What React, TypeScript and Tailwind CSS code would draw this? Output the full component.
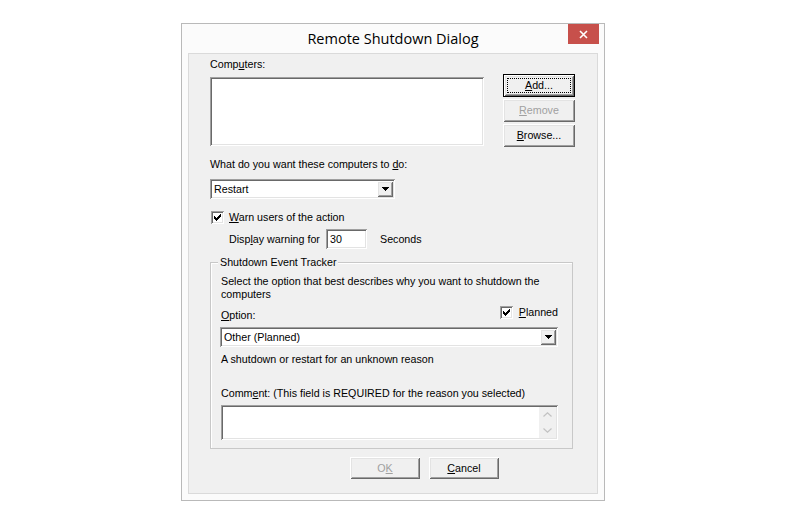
import React from "react";

const raised =
  "shadow-[inset_1px_1px_0_#ffffff,inset_-1px_-1px_0_#696969,inset_2px_2px_0_#e3e3e3,inset_-2px_-2px_0_#a0a0a0]";
const sunken =
  "shadow-[inset_1px_1px_0_#a0a0a0,inset_-1px_-1px_0_#ffffff,inset_2px_2px_0_#696969,inset_-2px_-2px_0_#e3e3e3]";

function Btn({
  children,
  def,
  disabled,
  className = "",
}: {
  children: React.ReactNode;
  def?: boolean;
  disabled?: boolean;
  className?: string;
}) {
  if (def) {
    return (
      <div className={`border border-black bg-[#f0f0f0] flex ${className}`}>
        <div className={`relative flex-1 flex items-center justify-center ${raised}`}>
          <div className="absolute inset-[3px] border border-dotted border-black" />
          <span className="relative">{children}</span>
        </div>
      </div>
    );
  }
  return (
    <div
      className={`bg-[#f0f0f0] flex items-center justify-center ${raised} ${
        disabled ? "text-[#a0a0a0]" : "text-black"
      } ${className}`}
    >
      {children}
    </div>
  );
}

function Arrow() {
  return (
    <svg width="7" height="4" viewBox="0 0 7 4" shapeRendering="crispEdges">
      <rect x="0" y="0" width="7" height="1" fill="#000" />
      <rect x="1" y="1" width="5" height="1" fill="#000" />
      <rect x="2" y="2" width="3" height="1" fill="#000" />
      <rect x="3" y="3" width="1" height="1" fill="#000" />
    </svg>
  );
}

function Select({ value, className = "" }: { value: string; className?: string }) {
  return (
    <div className={`flex bg-white p-[2px] ${sunken} ${className}`}>
      <div className="flex-1 flex items-center pl-[2px]">{value}</div>
      <div className={`w-[16px] bg-[#f0f0f0] flex items-center justify-center ${raised}`}>
        <Arrow />
      </div>
    </div>
  );
}

function Check() {
  return (
    <div className={`w-[13px] h-[13px] shrink-0 bg-white flex items-center justify-center ${sunken}`}>
      <svg width="7" height="7" viewBox="0 0 7 7" shapeRendering="crispEdges">
        <rect x="6" y="0" width="1" height="1" fill="#000" />
        <rect x="5" y="1" width="2" height="1" fill="#000" />
        <rect x="0" y="2" width="1" height="1" fill="#000" />
        <rect x="4" y="2" width="3" height="1" fill="#000" />
        <rect x="0" y="3" width="2" height="1" fill="#000" />
        <rect x="3" y="3" width="3" height="1" fill="#000" />
        <rect x="0" y="4" width="5" height="1" fill="#000" />
        <rect x="1" y="5" width="3" height="1" fill="#000" />
        <rect x="2" y="6" width="1" height="1" fill="#000" />
      </svg>
    </div>
  );
}

export default function App() {
  return (
    <div className="w-[786px] h-[524px] bg-white pt-[23px] pl-[181px]">
      <div className="relative w-[424px] h-[478px] border border-[#b9b9b9] bg-[#fbfbfb] flex flex-col px-[6px] pb-[6px]">
        {/* title bar */}
        <div className="h-[29px] flex items-center justify-center text-[14.5px] text-black font-['Open_Sans',sans-serif]">
          Remote Shutdown Dialog
        </div>
        <div className="absolute right-[5px] top-0 w-[31px] h-[20px] bg-[#c7504b] flex items-center justify-center">
          <svg width="9" height="9" viewBox="0 0 9 9">
            <path d="M1 1L8 8M8 1L1 8" stroke="#fff" strokeWidth="1.6" />
          </svg>
        </div>

        {/* client area */}
        <div className="flex-1 border border-[#dadada] bg-[#f0f0f0] flex flex-col text-[10.7px] leading-[13px] text-black font-['Liberation_Sans',Arial,sans-serif]">
          <div className="flex items-start pl-[21px]">
            <div className="flex flex-col w-[274px] pt-[4px]">
              <div>
                Comp<u>u</u>ters:
              </div>
              <div className={`mt-[6px] h-[69px] bg-white ${sunken}`} />
            </div>
            <div className="flex flex-col ml-[19px] pt-[20px] gap-[2px]">
              <Btn def className="w-[72px] h-[23px]">
                <u>A</u>dd...
              </Btn>
              <Btn disabled className="w-[72px] h-[23px]">
                <u>R</u>emove
              </Btn>
              <Btn className="w-[72px] h-[23px]">
                <u>B</u>rowse...
              </Btn>
            </div>
          </div>

          <div className="mt-[11px] pl-[21px]">
            What do you want these computers to <u>d</u>o:
          </div>
          <Select value="Restart" className="mt-[8px] ml-[21px] w-[185px] h-[20px]" />

          <div className="mt-[12px] ml-[22px] flex items-center h-[13px]">
            <Check />
            <span className="ml-[5px]">
              <u>W</u>arn users of the action
            </span>
          </div>

          <div className="mt-[5px] ml-[40px] flex items-center h-[20px]">
            <span className="w-[97px]">
              Disp<u>l</u>ay warning for
            </span>
            <div className={`w-[41px] h-[20px] bg-white flex items-center pl-[4px] ${sunken}`}>30</div>
            <span className="ml-[13px]">Seconds</span>
          </div>

          {/* group box */}
          <div className="relative mt-[13px] ml-[21px] w-[363px] h-[187px] border border-[#c8c8c8] shadow-[inset_1px_1px_0_#ffffff] flex flex-col">
            <span className="absolute left-[7px] top-[-7px] bg-[#f0f0f0] px-[2px]">Shutdown Event Tracker</span>
            <div className="mt-[12px] pl-[10px]">
              Select the option that best describes why you want to shutdown the
              <br />
              computers
            </div>
            <div className="flex items-start">
              <div className="mt-[8px] pl-[10px]">
                <u>O</u>ption:
              </div>
              <div className="ml-auto mt-[5px] mr-[14px] flex items-center h-[13px]">
                <Check />
                <span className="ml-[6px]">
                  <u>P</u>lanned
                </span>
              </div>
            </div>
            <Select value="Other (Planned)" className="mt-[5px] ml-[9px] w-[338px] h-[20px]" />
            <div className="mt-[6px] pl-[10px]">A shutdown or restart for an unknown reason</div>
            <div className="mt-[21px] pl-[10px]">
              Comm<u>e</u>nt: (This field is REQUIRED for the reason you selected)
            </div>
            <div className={`mt-[5px] ml-[10px] w-[337px] h-[35px] bg-white flex p-[2px] ${sunken}`}>
              <div className="flex-1" />
              <div className="w-[17px] bg-[#f0f0f0] flex flex-col items-center justify-between py-[5px]">
                <svg width="9" height="5" viewBox="0 0 9 5">
                  <path d="M0.5 4.5L4.5 0.8L8.5 4.5" stroke="#c2c2c2" strokeWidth="1.2" fill="none" />
                </svg>
                <svg width="9" height="5" viewBox="0 0 9 5">
                  <path d="M0.5 0.5L4.5 4.2L8.5 0.5" stroke="#c2c2c2" strokeWidth="1.2" fill="none" />
                </svg>
              </div>
            </div>
          </div>

          <div className="mt-[8px] ml-[161px] flex gap-[9px]">
            <Btn disabled className="w-[70px] h-[22px]">
              O<u>K</u>
            </Btn>
            <Btn className="w-[70px] h-[22px]">
              <u>C</u>ancel
            </Btn>
          </div>
        </div>
      </div>
    </div>
  );
}
